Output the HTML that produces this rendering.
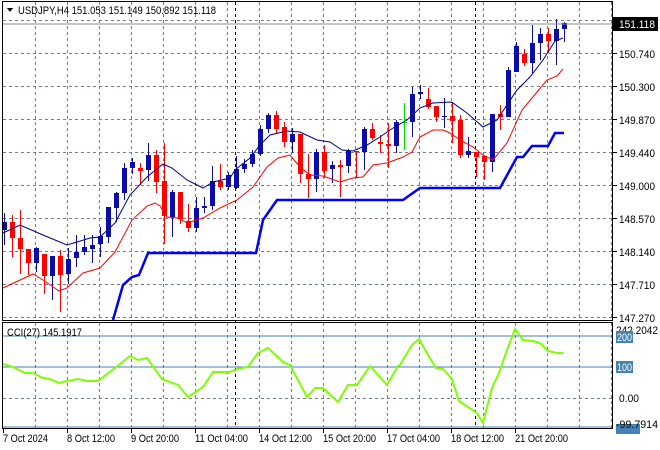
<!DOCTYPE html>
<html><head><meta charset="utf-8"><style>
html,body{margin:0;padding:0;background:#fff;}
body{width:660px;height:450px;overflow:hidden;position:relative;font-family:"Liberation Sans",sans-serif;}
svg{position:absolute;left:0;top:0;}
text{font-family:"Liberation Sans",sans-serif;font-size:11px;fill:#000;}
</style></head><body>
<svg id="s" width="660" height="450" viewBox="0 0 660 450" shape-rendering="crispEdges">
<g id="grid" stroke="#708090" stroke-width="1" stroke-dasharray="3,3" fill="none"></g>
<g id="cand"></g>
<polyline id="ma1" fill="none" stroke="#000080" stroke-width="1" shape-rendering="auto"/>
<polyline id="ma2" fill="none" stroke="#ff0000" stroke-width="1" shape-rendering="auto"/>
<polyline id="st" fill="none" stroke="#0000ff" stroke-width="2.5" shape-rendering="auto"/>
<line x1="3" y1="336" x2="612" y2="336" stroke="#4682b4"/>
<line x1="3" y1="367" x2="612" y2="367" stroke="#4682b4"/>
<line x1="3" y1="427" x2="612" y2="427" stroke="#4682b4"/>
<polyline id="cci" fill="none" stroke="#7fff00" stroke-width="2" shape-rendering="auto"/>
<line x1="3" y1="24" x2="612" y2="24" stroke="#8090a0"/>
<rect x="2.5" y="1.5" width="610" height="319" fill="none" stroke="#000"/>
<rect x="2.5" y="322.5" width="610" height="106" fill="none" stroke="#000"/>
<g id="ticks" stroke="#000"></g>
<path d="M7 8 L13 8 L10 12 Z" fill="#000"/>
<text x="18" y="14" textLength="198" lengthAdjust="spacingAndGlyphs">USDJPY,H4  151.053 151.149 150.892 151.118</text>
<text x="7" y="336" textLength="75" lengthAdjust="spacingAndGlyphs">CCI(27) 145.1917</text>
<g id="pax"></g>
<rect x="613" y="17" width="45" height="14" fill="#000"/>
<text x="619" y="28" style="fill:#fff" textLength="36" lengthAdjust="spacingAndGlyphs">151.118</text>
<text x="616" y="334" textLength="42" lengthAdjust="spacingAndGlyphs">242.2042</text>
<rect x="616" y="331" width="17" height="12" fill="#4682b4"/>
<text x="617" y="341" style="fill:#fff" textLength="15" lengthAdjust="spacingAndGlyphs">200</text>
<rect x="616" y="361" width="17" height="12" fill="#4682b4"/>
<text x="617" y="371" style="fill:#fff" textLength="15" lengthAdjust="spacingAndGlyphs">100</text>
<text x="619" y="402" textLength="20" lengthAdjust="spacingAndGlyphs">0.00</text>
<rect x="616" y="424" width="24" height="10" fill="#4682b4"/>
<text x="616" y="428" textLength="42" lengthAdjust="spacingAndGlyphs">-99.7914</text>
<text x="3" y="442" textLength="45" lengthAdjust="spacingAndGlyphs">7 Oct 2024</text>
<text x="67" y="442" textLength="48" lengthAdjust="spacingAndGlyphs">8 Oct 12:00</text>
<text x="131" y="442" textLength="48" lengthAdjust="spacingAndGlyphs">9 Oct 20:00</text>
<text x="195" y="442" textLength="53" lengthAdjust="spacingAndGlyphs">11 Oct 04:00</text>
<text x="259" y="442" textLength="53" lengthAdjust="spacingAndGlyphs">14 Oct 12:00</text>
<text x="323" y="442" textLength="53" lengthAdjust="spacingAndGlyphs">15 Oct 20:00</text>
<text x="387" y="442" textLength="53" lengthAdjust="spacingAndGlyphs">17 Oct 04:00</text>
<text x="451" y="442" textLength="53" lengthAdjust="spacingAndGlyphs">18 Oct 12:00</text>
<text x="515" y="442" textLength="53" lengthAdjust="spacingAndGlyphs">21 Oct 20:00</text>
</svg>
<script>
var NS="http://www.w3.org/2000/svg";
function el(p,t,a){var e=document.createElementNS(NS,t);for(var k in a)e.setAttribute(k,a[k]);document.getElementById(p).appendChild(e);return e;}
var L=["150.740","150.300","149.870","149.440","149.000","148.570","148.140","147.710","147.270"];
L.forEach(function(s,i){var t=el("pax","text",{x:619,y:58+33*i,textLength:36,lengthAdjust:"spacingAndGlyphs"});t.textContent=s;el("pax","line",{x1:613,y1:53.5+33*i,x2:617,y2:53.5+33*i,stroke:"#000"});});
for(var x=35;x<612;x+=32){el("grid","line",{x1:x+.5,y1:2,x2:x+.5,y2:320});el("grid","line",{x1:x+.5,y1:323,x2:x+.5,y2:428});}
for(var y=20;y<320;y+=33){el("grid","line",{x1:3,y1:y+.5,x2:612,y2:y+.5});}
el("grid","line",{x1:3,y1:398.5,x2:612,y2:398.5});
[235,475].forEach(function(x){el("grid","line",{x1:x+.5,y1:2,x2:x+.5,y2:428,stroke:"#000"});});
[3,67,131,195,259,323,387,451,515].forEach(function(x){el("ticks","line",{x1:x+.5,y1:429,x2:x+.5,y2:433});});
var C=[["b",222,230,213,245],["r",222,238,215,257],["r",238,249,210,274],["r",249,263,249,275],["b",248,263,247,272],["r",254,276,254,294],["b",256,276,256,300],["r",256,275,250,312],["b",259,274,248,284],["b",252,258,235,267],["b",247,252,235,255],["b",245,249,235,263],["b",236,244,227,257],["b",207,237,207,243],["b",193,208,192,222],["b",168,193,163,200],["b",162,168,158,174],["r",168,171,163,185],["b",155,170,143,181],["r",155,182,150,193],["r",181,216,143,244],["b",192,217,190,237],["r",192,219,192,224],["r",221,228,204,232],["b",208,228,197,232],["b",206,208,197,213],["b",181,206,166,210],["r",181,187,164,190],["b",175,187,172,190],["b",169,188,156,189],["b",164,169,159,173],["b",154,164,150,167],["b",129,154,125,156],["b",115,129,113,133],["r",115,129,111,133],["r",127,142,122,147],["b",134,142,128,153],["r",134,174,134,183],["r",174,179,154,198],["b",152,179,149,192],["r",152,171,145,178],["b",165,169,161,183],["r",165,167,160,197],["b",151,166,149,173],["r",151,152,151,178],["b",129,152,127,170],["r",129,138,123,140],["r",142,144,135,153],["r",144,146,123,168],["b",122,146,120,153],["g",122,122,103,150],["b",94,122,87,137],["b",92,94,85,99],["r",99,107,88,109],["r",106,117,106,122],["b",116,117,98,128],["r",116,121,102,143],["r",120,155,115,158],["b",151,155,137,158],["r",152,157,152,177],["r",156,162,156,180],["b",114,162,114,172],["r",114,117,105,130],["b",70,117,67,117],["b",46,72,42,72],["r",54,63,49,66],["b",43,63,25,73],["b",34,43,28,60],["r",34,41,28,53],["b",29,41,19,65],["b",23,29,22,42]];
var col={b:"#0c0ca8",r:"#ff0000",g:"#00dd00"};
C.forEach(function(c,i){var x=4+8*i;var f=col[c[0]];
el("cand","rect",{x:x,y:c[3],width:1,height:c[4]-c[3],fill:f});
var h=Math.max(1,c[2]-c[1]);el("cand","rect",{x:x-2,y:c[1],width:5,height:h,fill:f});});
function pl(id,a){document.getElementById(id).setAttribute("points",a.map(function(p){return p[0]+","+p[1]}).join(" "));}
pl("ma1",[[3,233],[20,225],[43,235],[67,245],[77,242],[90,238],[100,237],[115,223],[130,195],[147,177],[163,164],[172,168],[187,180],[203,188],[213,182],[230,178],[235,170],[250,158],[260,145],[270,135],[287,131],[300,132],[317,140],[330,142],[342,150],[353,151],[367,145],[380,137],[393,128],[407,120],[420,108],[433,103],[450,102],[453,103],[467,113],[483,127],[497,120],[517,90],[530,77],[543,60],[555,41],[563,38]]);
pl("ma2",[[3,288],[33,274],[43,280],[59,291],[67,288],[83,273],[100,268],[115,252],[132,220],[147,206],[155,203],[160,206],[167,217],[178,218],[187,223],[203,218],[220,208],[237,200],[253,187],[267,167],[278,158],[290,155],[300,167],[310,175],[323,176],[340,182],[353,178],[363,177],[373,165],[387,163],[403,157],[412,152],[420,137],[433,130],[443,130],[450,133],[460,140],[473,147],[483,155],[493,160],[507,143],[522,110],[537,92],[547,80],[557,76],[563,69]]);
pl("st",[[113,320],[123,285],[132,277],[139,275],[148,253],[256,253],[263,220],[277,200],[403,200],[410,195],[420,188],[500,188],[517,157],[523,157],[532,146],[548,146],[555,133],[564,133]]);
pl("cci",[[3,364],[13,367],[25,373],[33,373],[43,378],[50,379],[59,383],[67,381],[78,379],[87,381],[98,381],[115,368],[130,356],[138,360],[147,358],[162,379],[178,385],[188,397],[203,387],[213,372],[230,372],[237,369],[248,367],[258,353],[268,348],[283,362],[290,365],[307,397],[315,388],[323,388],[338,402],[348,385],[357,385],[370,366],[387,385],[398,366],[400,365],[412,345],[419,339],[428,355],[436,368],[443,369],[452,379],[459,401],[468,407],[477,413],[483,423],[492,388],[499,373],[507,350],[515,329],[523,340],[533,341],[540,343],[548,351],[557,353],[563,353]]);
</script>
</body></html>
